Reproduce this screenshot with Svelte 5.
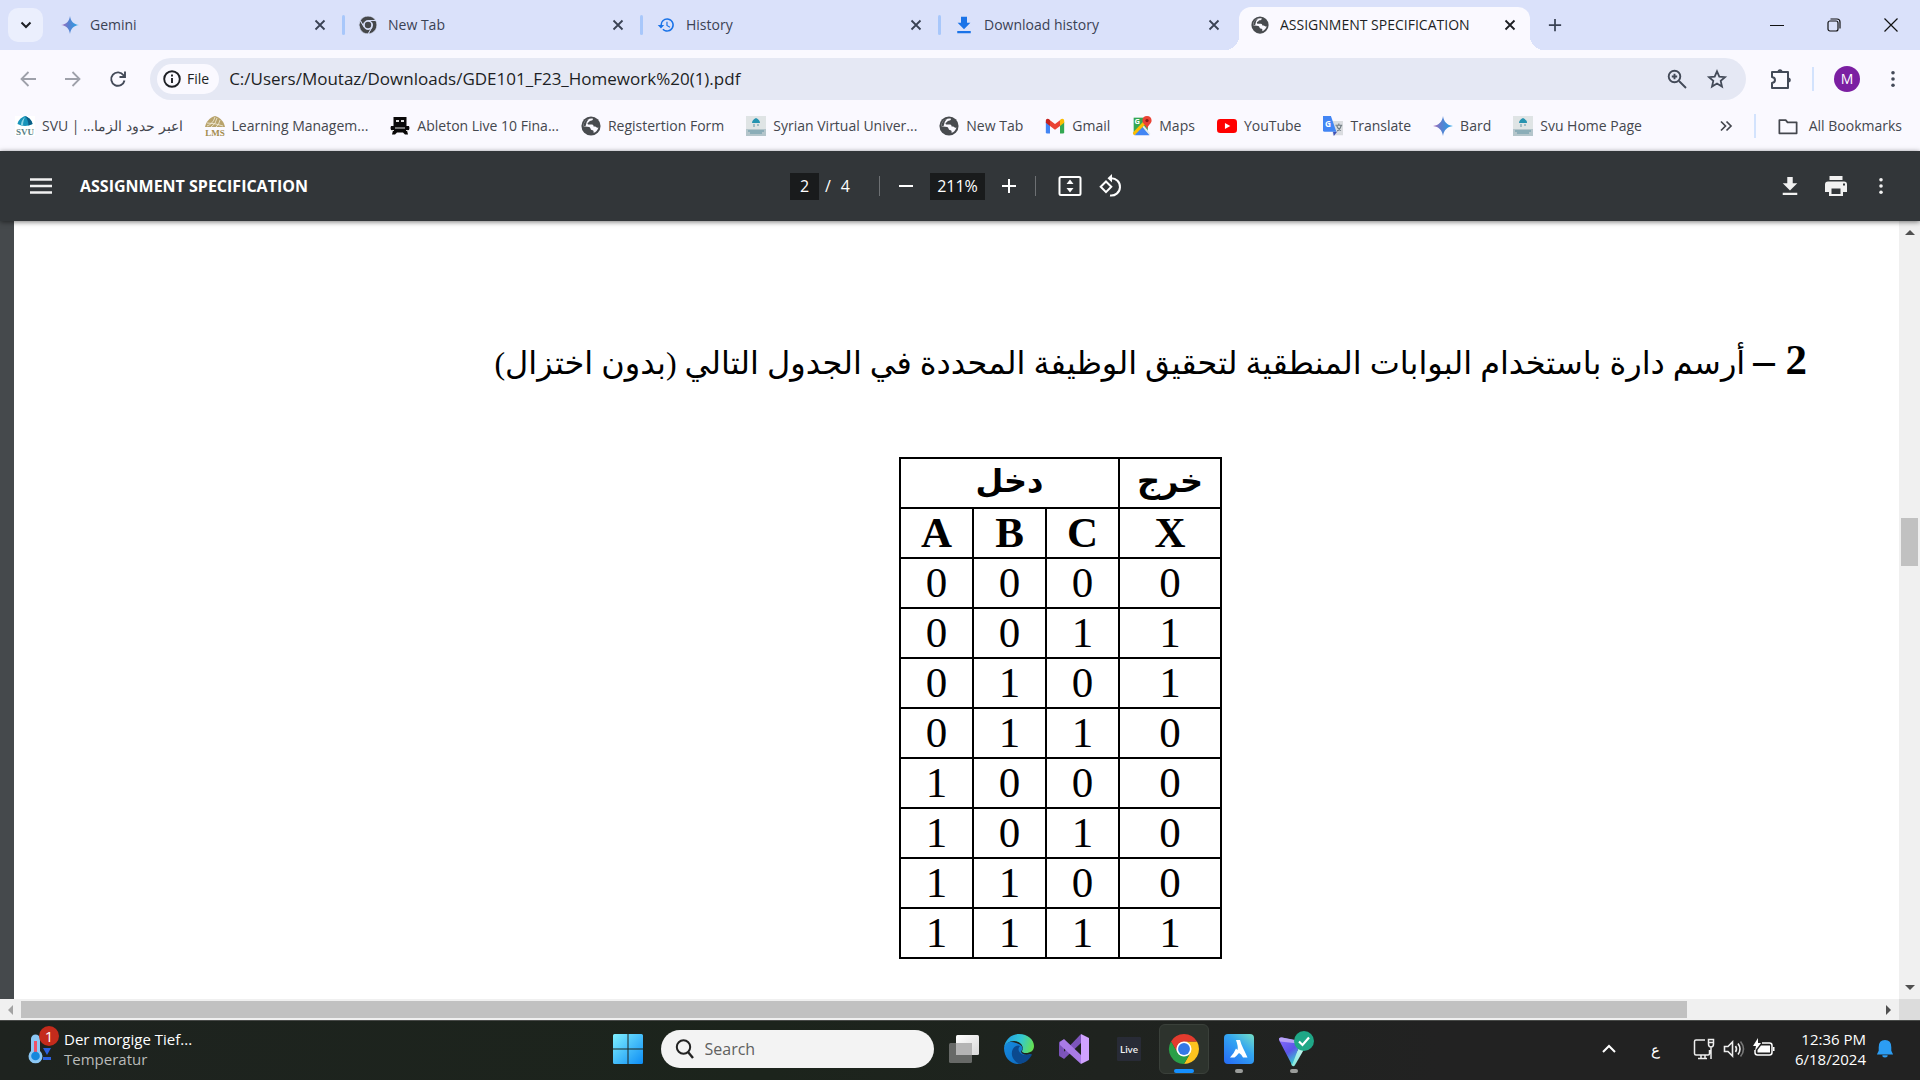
<script>
  const tabs = [
    { icon: 'spark', title: 'Gemini' },
    { icon: 'chromeMono', title: 'New Tab' },
    { icon: 'history', title: 'History' },
    { icon: 'downloadBlue', title: 'Download history' },
    { icon: 'globe', title: 'ASSIGNMENT SPECIFICATION', active: true }
  ];
  const bookmarks = [
    { icon: 'svu', title: 'SVU | ...اعبر حدود الزما' },
    { icon: 'lms', title: 'Learning Managem...' },
    { icon: 'ableton', title: 'Ableton Live 10 Fina...' },
    { icon: 'globe', title: 'Registertion Form' },
    { icon: 'svuPage', title: 'Syrian Virtual Univer...' },
    { icon: 'globe', title: 'New Tab' },
    { icon: 'gmail', title: 'Gmail' },
    { icon: 'maps', title: 'Maps' },
    { icon: 'youtube', title: 'YouTube' },
    { icon: 'translate', title: 'Translate' },
    { icon: 'spark', title: 'Bard' },
    { icon: 'svuPage', title: 'Svu Home Page' }
  ];
  const rows = [
    [0, 0, 0, 0],
    [0, 0, 1, 1],
    [0, 1, 0, 1],
    [0, 1, 1, 0],
    [1, 0, 0, 0],
    [1, 0, 1, 0],
    [1, 1, 0, 0],
    [1, 1, 1, 1]
  ];
  const apps = [
    { icon: 'taskview', label: 'Task View' },
    { icon: 'edge', label: 'Microsoft Edge' },
    { icon: 'vs', label: 'Visual Studio' },
    { icon: 'live', label: 'Ableton Live' },
    { icon: 'chrome', label: 'Google Chrome', state: 'current' },
    { icon: 'appA', label: 'Launcher', state: 'open' },
    { icon: 'vpn', label: 'VPN', state: 'open' }
  ];
  let url = $state('C:/Users/Moutaz/Downloads/GDE101_F23_Homework%20(1).pdf');
  let page = $state('2');
  let zoom = $state('211%');
  let query = $state('');
</script>

{#snippet icon(name)}
  {#if name === 'spark'}
    <svg viewBox="0 0 20 20"><defs><linearGradient id="spark" x1="0" x2="1" y1="0" y2="0"><stop offset="0" stop-color="#b06bb5" /><stop offset=".4" stop-color="#5b7fd0" /><stop offset="1" stop-color="#1fa5e8" /></linearGradient></defs><path fill="url(#spark)" d="M10 0c.7 5.600 4 9.300 10 10-6 .7-9.300 4.400-10 10C9.300 14.400 6 10.700 0 10 6 9.300 9.300 5.600 10 0z" /></svg>
  {:else if name === 'chromeMono'}
    <svg viewBox="0 0 48 48"><g fill="#45474a" stroke="#dae1fa" stroke-width="2.500"><path d="M24 12h20.780A24 24 0 0 1 24 48l10.390-18A12 12 0 0 0 24 12z" /><path d="M24 12h20.780A24 24 0 0 0 3.200 12l10.400 18A12 12 0 0 1 24 12z" /><path d="M34.390 30L24 48A24 24 0 0 1 3.200 12l10.400 18a12 12 0 0 0 20.790 0z" /></g><circle cx="24" cy="24" r="8.500" fill="#45474a" /></svg>
  {:else if name === 'history'}
    <svg viewBox="0 0 24 24" fill="#1a73e8"><path d="M13.500 3a9 9 0 0 0-9 9H1l4.300 4.500L9.600 12H6.500a7 7 0 1 1 2.060 4.940L7.140 18.360A9 9 0 1 0 13.500 3z" /><path d="M12.500 7.500V13l4.400 2.700.8-1.300-3.600-2.200V7.500z" /></svg>
  {:else if name === 'downloadBlue'}
    <svg viewBox="0 0 24 24" fill="#1a73e8"><path d="M8 1h8v8h4.500L12 17.500 3.500 9H8zM3 20h18v3H3z" /></svg>
  {:else if name === 'globe'}
    <svg viewBox="0 0 24 24"><circle cx="12" cy="12" r="11.500" fill="#484b4f" /><path fill="#faf9ff" d="M14.500 3.300c-.2 1.600-1.200 2.300-2.900 2.400-1.800.1-1.400 1.700-2.900 2.100-1 .3-1.200 1.800-.2 2.400h4.700c1.300 0 1.800 1 1.900 2.500h1.800c1.600 0 1.300 2.200 4.100 1-.9 3.200-3.200 5.600-6 6.500.6-2.700-.2-3.300-2.300-3.500-1.300-.1-1.200-3-2.900-3.500L3 12.200C2.700 7 7.500 1.900 14.500 3.300z" /><path fill="#484b4f" d="M3 12c0-4 2.500-7.500 6.500-8.700L7 6.800 5.500 12z" /></svg>
  {:else if name === 'svu'}
    <svg viewBox="0 0 20 20"><path fill="#fff" d="M0 0h20v20H0z" /><path fill="#1794ba" d="M10 0C5 2 3 5 2.500 8q7.500 4 15 0C17 5 15 2 10 0z" /><path fill="#0b5d86" d="M10 0c5 2 7 5 7.500 8q-2 1-4 1.400C13.500 6 12 2 10 0z" /><path fill="#8bd4e4" d="M10 1C7 4 6 6 6 9l2 .3C8 6 9 3 10 1z" /><text x="10" y="19" font-size="9" font-weight="bold" text-anchor="middle" fill="#5b7f86" font-family="Liberation Serif, serif">SVU</text></svg>
  {:else if name === 'lms'}
    <svg viewBox="0 0 20 20"><path fill="#b8a36c" d="M10 0C4 2 1 6 0 11h20C19 6 16 2 10 0z" /><path stroke="#f4efdc" stroke-width=".8" fill="none" d="M2 10q6-2 8-9M6 11q5-3 6-9M11 11q3-2 4-7M2 7q8 0 16 3" /><text x="10" y="20" font-size="9" font-weight="bold" text-anchor="middle" fill="#a38c4c" font-family="Liberation Serif, serif">LMS</text></svg>
  {:else if name === 'ableton'}
    <svg viewBox="0 0 20 20"><path fill="#090909" d="M3.500 1h13v9H19q1 2 0 4l-2 .5 1 4h-3l-2-2H7l-2 2H2l1-4-2-.5q-1-2 0-4h2.500z" /><path fill="#ddd" d="M6 4h3v2H6zM11 4h3v2h-3zM5 11.500h10v1H5zM1 14h3v1H1zM16 14h3v1h-3z" /></svg>
  {:else if name === 'svuPage'}
    <svg viewBox="0 0 20 20"><path fill="#dfe4e5" d="M0 0h20v20H0z" /><path fill="#b4c5cb" d="M0 13h20v7H0z" /><path fill="#2593b0" d="M10 2Q6 4 6 7h8q0-3-4-5z" /><path stroke="#6295a5" d="M8 8v3M12 8v2M2 15h16M4 17h12" /></svg>
  {:else if name === 'gmail'}
    <svg viewBox="0 0 24 24"><path fill="#4285f4" d="M1 7v12.500Q1 21 2.500 21H6V10z" /><path fill="#34a853" d="M18 10v11h3.500q1.500 0 1.500-1.500V7z" /><path fill="#ea4335" d="M6 5l6 4.600L18 5v7l-6 4.500L6 12z" /><path fill="#c5221f" d="M1 6c0-3 2.500-3.500 5-1.300V12L1 8z" /><path fill="#fbbc04" d="M23 6c0-3-2.500-3.500-5-1.300V12l5-4z" /></svg>
  {:else if name === 'maps'}
    <svg viewBox="0 0 24 24"><path fill="#34a853" d="M2 2h17v20H2z" /><path fill="#e6eaec" d="M14 11l8 10q0 2-2 2l-8-10z" /><path fill="#4285f4" d="M3 23l9-10 9 10z" /><path fill="#fbbc04" d="M1 20L15 5l2 4L3 23q-2-1-2-3z" /><path fill="#ea4335" d="M18 0c-3.500 0-5.500 2.500-5.500 5.500 0 4 4 5 5.500 10 1.500-5 5.500-6 5.500-10C23.500 2.500 21.500 0 18 0z" /><circle cx="18" cy="5.500" r="2" fill="#8c1b16" /><text x="3" y="10" font-size="9" font-weight="bold" fill="#fff" font-family="Open Sans, sans-serif">G</text></svg>
  {:else if name === 'youtube'}
    <svg viewBox="0 0 24 24"><rect y="3.500" width="24" height="17" rx="4" fill="#f00" /><path fill="#fff" d="M9.500 8.300v7.400L16 12z" /></svg>
  {:else if name === 'translate'}
    <svg viewBox="0 0 24 24"><path fill="#dadce0" d="M9 6h15v17H12z" /><path fill="#3f51b5" d="M12 19h5l-4 5z" /><path fill="#4285f4" d="M0 0h9.500L16 19H2q-2 0-2-2z" /><text x="2.500" y="13" font-size="10" font-weight="bold" fill="#fff" font-family="Open Sans, sans-serif">G</text><path fill="none" stroke="#6f7b82" stroke-width="1.300" d="M15 11h8M19 9v2M22 11q-1 5-5 7M16.500 12q1 3 5 5.500" /></svg>
  {:else if name === 'close'}
    <svg viewBox="0 0 12 12" stroke="currentColor" stroke-width="1.800" fill="none"><path d="M1.500 1.500l9 9M10.500 1.500l-9 9" /></svg>
  {:else if name === 'chevronDown'}
    <svg viewBox="0 0 12 12" stroke="currentColor" stroke-width="2" fill="none"><path d="M1.500 3.500L6 8l4.500-4.500" /></svg>
  {:else if name === 'plus'}
    <svg viewBox="0 0 16 16" stroke="currentColor" stroke-width="2" fill="none"><path d="M8 1v14M1 8h14" /></svg>
  {:else if name === 'minus'}
    <svg viewBox="0 0 16 16" stroke="currentColor" stroke-width="2" fill="none"><path d="M1 8h14" /></svg>
  {:else if name === 'winMin'}
    <svg viewBox="0 0 14 14" stroke="#111" fill="none"><path d="M0 7.500h14" /></svg>
  {:else if name === 'winRestore'}
    <svg viewBox="0 0 14 14" stroke="#111" stroke-width="1.200" fill="none"><rect x="1" y="3" width="10" height="10" rx="2" /><path d="M3.500 1h6.500q3 0 3 3v6.500" /></svg>
  {:else if name === 'winClose'}
    <svg viewBox="0 0 14 14" stroke="#111" stroke-width="1.200" fill="none"><path d="M.5.5l13 13M13.500.5l-13 13" /></svg>
  {:else if name === 'back'}
    <svg viewBox="0 0 16 16" stroke="currentColor" stroke-width="1.800" fill="none"><path d="M8.500 1L1.500 8l7 7M1.500 8H16" /></svg>
  {:else if name === 'forward'}
    <svg viewBox="0 0 16 16" stroke="currentColor" stroke-width="1.800" fill="none"><path d="M7.500 1l7 7-7 7M14.500 8H0" /></svg>
  {:else if name === 'reload'}
    <svg viewBox="0 0 16 16" stroke="currentColor" stroke-width="1.900" fill="none"><path d="M14.500 9.500A6.700 6.700 0 1 1 13.500 4.300L15 6M15 .5V6H9.500" /></svg>
  {:else if name === 'info'}
    <svg viewBox="0 0 18 18" fill="none" stroke="currentColor" stroke-width="1.900"><circle cx="9" cy="9" r="7.800" /><path d="M9 8v5M9 4.500v2" /></svg>
  {:else if name === 'magnify'}
    <svg viewBox="0 0 20 20" fill="none" stroke="currentColor" stroke-width="1.900"><circle cx="7.500" cy="7.500" r="5.800" /><path d="M12 12l7 7M7.500 4.800v5.400M4.800 7.500h5.400" /></svg>
  {:else if name === 'star'}
    <svg viewBox="0 0 20 20" fill="none" stroke="currentColor" stroke-width="1.800"><path d="M10 2.300l2.300 5.300 5.700.5-4.300 3.800 1.300 5.700-5-3-5 3 1.300-5.700L2 8.100l5.700-.5z" /></svg>
  {:else if name === 'puzzle'}
    <svg viewBox="0 0 22 22"><path fill="none" stroke="currentColor" stroke-width="2" stroke-linejoin="round" d="M2 4h16v16H2v-5q3-.5 3-3t-3-3z" /><path fill="currentColor" d="M7.500 4a2.500 2.800 0 0 1 5 0zM18 9.500a2.800 2.500 0 0 1 0 5z" /></svg>
  {:else if name === 'dots'}
    <svg viewBox="0 0 20 20" fill="currentColor"><circle cx="10" cy="3" r="2" /><circle cx="10" cy="10" r="2" /><circle cx="10" cy="17" r="2" /></svg>
  {:else if name === 'more'}
    <svg viewBox="0 0 12 12" stroke="currentColor" stroke-width="1.700" fill="none"><path d="M1 1.500L5.500 6 1 10.500M6.500 1.500L11 6l-4.500 4.500" /></svg>
  {:else if name === 'folder'}
    <svg viewBox="0 0 22 20" stroke="currentColor" stroke-width="1.900" fill="none" stroke-linejoin="round"><path d="M1.500 3.500h7l2 2.500h10v12h-19z" /></svg>
  {:else if name === 'menu'}
    <svg viewBox="0 0 22 16" stroke="currentColor" stroke-width="2.400"><path d="M0 1.500h22M0 8h22M0 14.500h22" /></svg>
  {:else if name === 'fit'}
    <svg viewBox="0 0 24 24" fill="none" stroke="currentColor" stroke-width="2"><rect x="1.500" y="3" width="21" height="18" rx="1.500" /><path fill="currentColor" stroke="none" d="M12 5.500L8.500 10h7zM12 18.500L8.500 14h7z" /></svg>
  {:else if name === 'rotate'}
    <svg viewBox="0 0 24 24" fill="none" stroke="currentColor" stroke-width="2"><path d="M8 7.500l5.300 5.300L8 18.100l-5.300-5.300zM13 4.200a8.700 8.700 0 1 1-1 17.300" /><path fill="currentColor" stroke="none" d="M14 0v8.500L9.500 4.200z" /></svg>
  {:else if name === 'download'}
    <svg viewBox="0 0 20 22" fill="currentColor"><path d="M7 1h6v7h5l-8 8-8-8h5zM2 18.500h16V21H2z" /></svg>
  {:else if name === 'print'}
    <svg viewBox="0 0 24 24" fill="currentColor"><path d="M5.500 2h13v4h-13zM4 7.500h16a3 3 0 0 1 3 3V18h-4v4H5v-4H1v-7.500a3 3 0 0 1 3-3zM7.500 14.500V20h9v-5.500zM19 9.500v2h2v-2z" fill-rule="evenodd" /></svg>
  {:else if name === 'windows'}
    <svg viewBox="0 0 30 30"><defs><linearGradient id="win" x1="0" y1="0" x2="1" y2="1"><stop offset="0" stop-color="#7ff0ff" /><stop offset="1" stop-color="#0d8df5" /></linearGradient></defs><path fill="url(#win)" d="M1.500 0h13v14.500H0v-13Q0 0 1.500 0zM15.500 0h13Q30 0 30 1.500v13H15.500zM0 15.500h14.500V30h-13Q0 30 0 28.500zM15.500 15.500H30v13q0 1.500-1.500 1.500h-13z" /></svg>
  {:else if name === 'search'}
    <svg viewBox="0 0 20 20" fill="none" stroke="#222" stroke-width="2"><circle cx="8.500" cy="8" r="6.700" /><path d="M13 13l5 6" stroke-width="2.400" /></svg>
  {:else if name === 'taskview'}
    <svg viewBox="0 0 30 30"><defs><linearGradient id="tv" x1="0" y1="0" x2="1" y2="1"><stop offset="0" stop-color="#fff" /><stop offset="1" stop-color="#d8d8d8" /></linearGradient></defs><rect y="9" width="23" height="20" rx="1.500" fill="#676967" /><rect x="7" y="1" width="23" height="20" rx="1.500" fill="url(#tv)" /><path fill="#b4b4b4" d="M7 9h16v12H8.500Q7 21 7 19.500z" /></svg>
  {:else if name === 'edge'}
    <svg viewBox="0 0 30 30"><defs><linearGradient id="eg" x1="0" y1=".3" x2="1" y2=".5"><stop offset="0" stop-color="#219ee6" /><stop offset=".55" stop-color="#34c8d2" /><stop offset="1" stop-color="#65e052" /></linearGradient><linearGradient id="eb" x1="0" y1="0" x2="1" y2="1"><stop offset="0" stop-color="#168be0" /><stop offset="1" stop-color="#0c66bc" /></linearGradient></defs><path fill="url(#eb)" d="M0 14C1 8 7 7 12 9c5 1 8 5 6 7-3 3 2 6 9 4-3 7-9 10-14 10C6 29.500 0 23 0 14z" /><path fill="#0b498f" d="M12 12c-6 3-6 13 3 17.800 6 0 10-4 12.500-8.300.7-1.300 0-1.700-1-1.300-5 2.300-12 0-12-5.200 0-1 .5-2 1.500-3-1.500-1-3-.5-4 0z" /><path fill="url(#eg)" d="M0 14C1 5 8 0 15 0c9 0 15 6 15 12 0 5-4 7-8 7-3 0-5-1-3.500-3C20 13 17 7 10 7 5 7 1 10 0 14z" /></svg>
  {:else if name === 'vs'}
    <svg viewBox="0 0 30 30"><path fill="#6b47a3" d="M0 8l4-2v18l-4-2z" /><path fill="#7a52b8" d="M4 6l3 2-2 16-5-3V9z" /><path fill="#1f261f" d="M5 11l4.500 4L5 19z" /><path fill="#7d55bb" d="M1 22L22 0v9L5 25z" /><path fill="#a97be6" d="M1 8l4-3 17 16v9L1 11z" /><path fill="#d0a2ff" d="M22 0l8 4v22l-8 4z" /></svg>
  {:else if name === 'live'}
    <svg viewBox="0 0 30 30"><rect x="3" y="3" width="24" height="24" rx="1" fill="#282b36" /><text x="15" y="19" font-size="10" font-weight="600" text-anchor="middle" fill="#f2f2f2" font-family="Lato, sans-serif">Live</text></svg>
  {:else if name === 'chrome'}
    <svg viewBox="0 0 48 48"><circle cx="24" cy="24" r="13" fill="#fff" /><path fill="#fcc31e" d="M24 12h20.780A24 24 0 0 1 24 48l10.390-18A12 12 0 0 0 24 12z" /><path fill="#e33b2e" d="M24 12h20.780A24 24 0 0 0 3.200 12l10.400 18A12 12 0 0 1 24 12z" /><path fill="#2a9f47" d="M34.390 30L24 48A24 24 0 0 1 3.200 12l10.400 18a12 12 0 0 0 20.790 0z" /><circle cx="24" cy="24" r="9.500" fill="#3478e6" /></svg>
  {:else if name === 'appA'}
    <svg viewBox="0 0 30 30"><defs><linearGradient id="aa" x1=".2" y1="1" x2="1" y2="0"><stop offset="0" stop-color="#2772f6" /><stop offset=".55" stop-color="#33a6f1" /><stop offset="1" stop-color="#76e0c5" /></linearGradient></defs><rect width="30" height="30" rx="4" fill="url(#aa)" /><path fill="#fff" d="M12 6h4q1 4 3 8t4.500 9.500h-4.500q-1.500-3.500-4-4.500-2.500 3-4.500 4.500H6q4-4 6-9l1.500 1.500q1-3-1.500-10z" /></svg>
  {:else if name === 'vpn'}
    <svg viewBox="0 0 36 36"><defs><linearGradient id="vp" x1="0" y1="0" x2=".6" y2="1"><stop offset="0" stop-color="#8c6cff" /><stop offset=".6" stop-color="#5b55e8" /><stop offset="1" stop-color="#3bc9d0" /></linearGradient><linearGradient id="vq" x1="0" y1="1" x2="1" y2="0"><stop offset="0" stop-color="#7fe6dc" /><stop offset="1" stop-color="#d9f8f4" /></linearGradient></defs><path fill="url(#vq)" d="M15 30L26 12l4 3-11 19q-1.500 2.500-3.500 0z" /><path fill="url(#vp)" d="M3 8q0-2 3-1.500L22 10q3.500 1 1.500 4.500L16.500 33q-1 0-1.500-1L3.500 10z" /><path fill="#b7a2f5" d="M3 8q0-2 3-1.500L22 9.500v3L4 10.500z" /><circle cx="28" cy="10" r="10" fill="#1fa787" /><path fill="none" stroke="#fff" stroke-width="2.200" d="M23 10.500l3.500 3.500 6.500-7.500" /></svg>
  {:else if name === 'caretUp'}
    <svg viewBox="0 0 16 16" fill="none" stroke="#fff" stroke-width="2"><path d="M2 11l6-6 6 6" /></svg>
  {:else if name === 'network'}
    <svg viewBox="0 0 22 22" fill="none" stroke="#eee" stroke-width="1.500"><path d="M12 2H3q-1.500 0-1.500 1.500v12Q1.500 17 3 17h12q1.500 0 1.500-1.500V12M5 20.500h9M8 17v3M12 17v3M18 9v12M15.500 1.500h5V6q0 3-2.500 3t-2.500-3zM15.500 4.500h5" /></svg>
  {:else if name === 'volume'}
    <svg viewBox="0 0 22 22" fill="none" stroke="#eee" stroke-width="1.600"><path d="M1.500 8.500h3.500L9.500 4v14L5 13.500H1.500zM12.500 8q2 3 0 6M15 5.500q4 5.500 0 11" /><path stroke="#777" d="M17.500 3.500q6 7.500 0 15" /></svg>
  {:else if name === 'battery'}
    <svg viewBox="0 0 22 22"><path fill="none" stroke="#fff" stroke-width="1.500" d="M9 5h7.500Q19 5 19 7.500v7q0 2.500-2.500 2.500h-12Q2 17 2 14.500V12" /><path fill="#fff" d="M8 7.500h9v7H4.500V12zM20 9h1.500v4H20zM5 0L0 8h3l-1 5 6-8H5z" /></svg>
  {:else if name === 'bell'}
    <svg viewBox="0 0 18 20" fill="#2c9df3"><path d="M9 0Q2 0 2 8v4l-2 4h18l-2-4V8q0-8-7-8zM6 17h6q0 2.500-3 2.500T6 17z" /></svg>
  {:else if name === 'thermo'}
    <svg viewBox="0 0 26 30"><path fill="#8cc8f5" d="M3 5a4.500 4.500 0 0 1 9 0v12a7 7 0 1 1-9 0z" /><path fill="#ef5368" d="M6 7h3v12H6z" /><circle cx="7.500" cy="22" r="4.300" fill="#1487dc" /><path fill="#2b61e0" d="M15 14h8l-4 7zM15 23h8v3h-8z" /></svg>
  {/if}
{/snippet}

<div class="screen">
  <header class="tabstrip">
    <button class="tabsearch" aria-label="Search tabs"><span class="i12">{@render icon('chevronDown')}</span></button>
    <div class="tabs" role="tablist">
      {#each tabs as tab}
        <div class="tab" class:active={tab.active} role="tab" aria-selected={!!tab.active} tabindex="0">
          <span class="i18">{@render icon(tab.icon)}</span>
          <span class="title">{tab.title}</span>
          <button class="i12" aria-label="Close tab">{@render icon('close')}</button>
        </div>
      {/each}
    </div>
    <button class="newtab" aria-label="New tab"><span class="i14">{@render icon('plus')}</span></button>
    <div class="window">
      <button class="i14" aria-label="Minimize">{@render icon('winMin')}</button>
      <button class="i14" aria-label="Restore">{@render icon('winRestore')}</button>
      <button class="i14" aria-label="Close">{@render icon('winClose')}</button>
    </div>
  </header>

  <div class="toolbar">
    <nav class="nav">
      <button class="i16 faded" aria-label="Back">{@render icon('back')}</button>
      <button class="i16 faded" aria-label="Forward">{@render icon('forward')}</button>
      <button class="i16" aria-label="Reload">{@render icon('reload')}</button>
    </nav>
    <div class="omnibox">
      <button class="chip"><span class="i18">{@render icon('info')}</span>File</button>
      <input aria-label="Address" bind:value={url} />
      <button class="i20" aria-label="Zoom">{@render icon('magnify')}</button>
      <button class="i20" aria-label="Bookmark this tab">{@render icon('star')}</button>
    </div>
    <div class="extras">
      <button class="i22" aria-label="Extensions">{@render icon('puzzle')}</button>
      <span class="rule"></span>
      <button class="avatar" aria-label="Profile">M</button>
      <button class="i18 kebab" aria-label="Menu">{@render icon('dots')}</button>
    </div>
  </div>

  <nav class="bookmarks">
    {#each bookmarks as mark}
      <a href="#top"><span class="i20">{@render icon(mark.icon)}</span><span dir="ltr">{mark.title}</span></a>
    {/each}
    <div class="rest">
      <button class="i12" aria-label="More bookmarks">{@render icon('more')}</button>
      <span class="rule"></span>
      <a class="all" href="#top"><span class="i20">{@render icon('folder')}</span>All Bookmarks</a>
    </div>
  </nav>

  <div class="pdfbar">
    <div class="side">
      <button class="i22" aria-label="Menu">{@render icon('menu')}</button>
      <h1>ASSIGNMENT SPECIFICATION</h1>
    </div>
    <div class="mid">
      <input class="page" aria-label="Page" bind:value={page} />
      <span class="of">/</span><span class="total">4</span>
      <span class="line"></span>
      <button class="i16" aria-label="Zoom out">{@render icon('minus')}</button>
      <input class="zoom" aria-label="Zoom level" bind:value={zoom} />
      <button class="i16" aria-label="Zoom in">{@render icon('plus')}</button>
      <span class="line"></span>
      <div class="views">
        <button class="i24" aria-label="Fit to page">{@render icon('fit')}</button>
        <button class="i24" aria-label="Rotate">{@render icon('rotate')}</button>
      </div>
    </div>
    <div class="side end">
      <button class="i20" aria-label="Download">{@render icon('download')}</button>
      <button class="i24" aria-label="Print">{@render icon('print')}</button>
      <button class="i18" aria-label="More actions">{@render icon('dots')}</button>
    </div>
  </div>

  <div class="viewer">
    <main class="sheet" dir="rtl" lang="ar">
      <h2><b>2 –</b> أرسم دارة باستخدام البوابات المنطقية لتحقيق الوظيفة المحددة في الجدول التالي (بدون اختزال)</h2>
      <table dir="ltr">
        <colgroup><col span="3" class="in" /><col class="out" /></colgroup>
        <thead>
          <tr class="ar"><th colspan="3">دخل</th><th>خرج</th></tr>
          <tr><th>A</th><th>B</th><th>C</th><th>X</th></tr>
        </thead>
        <tbody>
          {#each rows as row}
            <tr>{#each row as bit}<td>{bit}</td>{/each}</tr>
          {/each}
        </tbody>
      </table>
    </main>
    <div class="vscroll"><i class="arrow up"></i><div class="track"><div class="thumb"></div></div><i class="arrow down"></i></div>
    <div class="hscroll"><i class="arrow left"></i><div class="track"><div class="thumb"></div></div><i class="arrow right"></i></div>
    <div class="corner"></div>
  </div>

  <footer class="taskbar">
    <button class="weather">
      <span class="thermo">{@render icon('thermo')}<span class="badge">1</span></span>
      <span class="lines"><span>Der morgige Tief...</span><span class="dim">Temperatur</span></span>
    </button>
    <div class="dock">
      <button class="i30" aria-label="Start">{@render icon('windows')}</button>
      <label class="search"><span class="i20">{@render icon('search')}</span><input aria-label="Search" placeholder="Search" bind:value={query} /></label>
      <div class="apps">
        {#each apps as app}
          <button class="app {app.state ?? ''}" class:large={app.icon === 'vpn'} aria-label={app.label}>{@render icon(app.icon)}</button>
        {/each}
      </div>
    </div>
    <div class="tray">
      <button class="i16" aria-label="Hidden icons">{@render icon('caretUp')}</button>
      <button class="lang" lang="ar">ع</button>
      <div class="status">
        <span class="i22">{@render icon('network')}</span>
        <span class="i22">{@render icon('volume')}</span>
        <span class="i22">{@render icon('battery')}</span>
      </div>
      <div class="clock"><span>12:36 PM</span><span>6/18/2024</span></div>
      <button class="i18" aria-label="Notifications">{@render icon('bell')}</button>
    </div>
  </footer>
</div>

<style>
  :global(body) { margin: 0; }
  * { box-sizing: border-box; }
  .screen {
    display: flex; flex-direction: column; min-height: 100vh; background: #faf9ff;
    font: 14px/20px "Open Sans", "Noto Sans", sans-serif; color: #44474e; overflow: hidden;
  }
  button { border: 0; padding: 0; background: none; color: inherit; font: inherit; flex: none; }
  input { border: 0; padding: 0; background: none; color: inherit; font: inherit; min-width: 0; outline: 0; }
  a { color: inherit; text-decoration: none; }
  svg { display: block; width: 100%; height: 100%; overflow: visible; }
  .i12, .i14, .i16, .i18, .i20, .i22, .i24, .i30 { display: block; flex: none; }
  .i12 { width: 12px; height: 12px; }
  .i14 { width: 14px; height: 14px; }
  .i16 { width: 16px; height: 16px; }
  .i18 { width: 18px; height: 18px; }
  .i20 { width: 20px; height: 20px; }
  .i22 { width: 22px; height: 22px; }
  .i24 { width: 24px; height: 24px; }
  .i30 { width: 30px; height: 30px; }

  .tabstrip { display: flex; align-items: center; height: 50px; padding: 0 22px 0 8px; background: #dae1fa; color: #3a4254; }
  .tabsearch { display: grid; place-items: center; width: 35px; height: 34px; border-radius: 10px; background: #ebeffd; color: #1d1f24; margin-right: 4px; }
  .tabs { display: flex; align-self: stretch; min-width: 0; }
  .tab { display: flex; align-items: center; gap: 11px; flex: 0 1 298px; width: 298px; min-width: 0; padding: 0 19px 0 14px; position: relative; }
  .tab:not(.active)::after { content: ""; position: absolute; right: 0; top: 15px; width: 3px; height: 20px; border-radius: 2px; background: #a8c7fa; }
  .tab:nth-last-child(2)::after { display: none; }
  .title { flex: 1; overflow: hidden; white-space: nowrap; }
  .tab.active { flex-basis: 291px; margin-top: 7px; padding: 0 14px 7px 12px; border-radius: 12px 12px 0 0; background: #faf9ff; color: #1d1f24; }
  .tab.active::before, .tab.active::after { content: ""; position: absolute; bottom: 0; width: 14px; height: 14px; }
  .tab.active::before { right: 100%; background: radial-gradient(circle at 0 0, transparent 14px, #faf9ff 14px); }
  .tab.active::after { display: block; top: auto; right: auto; left: 100%; border-radius: 0; background: radial-gradient(circle at 100% 0, transparent 14px, #faf9ff 14px); }
  .newtab { margin-left: 18px; }
  .window { display: flex; gap: 43px; margin-left: auto; }

  .toolbar { display: flex; align-items: center; height: 58px; padding: 0 18px 0 20px; color: #434a58; }
  .nav { display: flex; gap: 29px; width: 130px; }
  .faded { color: #9ea1aa; }
  .omnibox { display: flex; align-items: center; flex: 1; height: 42px; padding: 0 19px 0 7px; border-radius: 21px; background: #e5e8f4; }
  .chip { display: flex; align-items: center; gap: 6px; height: 30px; padding: 0 10px 0 6px; border-radius: 15px; background: #faf9ff; color: #1d1f24; }
  .omnibox input { flex: 1; margin-left: 10px; font-size: 17px; color: #1d1f24; }
  .omnibox .i20 + .i20 { margin-left: 20px; }
  .extras { display: flex; align-items: center; margin-left: 24px; gap: 20px; }
  .kebab { margin-left: 4px; }
  .rule { width: 2px; height: 24px; background: #d3e3fd; }
  .avatar { width: 26px; height: 26px; border-radius: 50%; background: #7b1fa2; color: #fff; }

  .bookmarks { display: flex; align-items: center; gap: 22px; height: 43px; padding: 0 18px 7px 15px; white-space: nowrap; }
  .bookmarks a { display: flex; align-items: center; gap: 7px; }
  .rest { display: flex; align-items: center; gap: 22px; margin-left: auto; }
  .rest .all { gap: 11px; }

  .pdfbar { display: grid; grid-template-columns: 1fr auto 1fr; align-items: center; height: 70px; padding: 0 30px; background: #323639; color: #f1f1f1; box-shadow: 0 1px 5px #0008; z-index: 1; }
  .side { display: flex; align-items: center; gap: 28px; }
  .side .i22 { height: 16px; }
  .end { justify-content: flex-end; gap: 24px; }
  h1 { margin: 0; font-size: 16px; line-height: 20px; font-weight: 700; color: #fff; }
  .mid { display: flex; align-items: center; color: #fff; font-size: 16px; margin-right: 8px; }
  .mid input { height: 27px; background: #191b1c; text-align: center; }
  .page { width: 29px; }
  .zoom { width: 55px; margin: 0 16px; }
  .of { margin: 0 10px 0 6px; }
  .total { margin-right: 11px; }
  .line { width: 1px; height: 20px; background: #6d7073; margin: 0 18px; }
  .views { display: flex; gap: 16px; margin-left: 4px; }

  .viewer { flex: 1; display: grid; grid-template: 1fr 21px / 1fr 21px; background: #f0f0f0; }
  .sheet { border-left: 14px solid #45494c; background: #fff; color: #000; padding: 109px 92px 39px 300px; font-family: "Liberation Serif", "DejaVu Sans", serif; }
  h2 { margin: 0; font-size: 32px; line-height: 60px; font-weight: 400; white-space: nowrap; }
  h2 b { font-size: 43px; }
  table { margin: 64px auto 0; border-collapse: collapse; table-layout: fixed; width: 321px; text-align: center; font-size: 43px; line-height: 48px; }
  .in { width: 73px; }
  .out { width: 102px; }
  th, td { padding: 0; height: 50px; border: 2px solid #000; }
  .ar { font-size: 32px; line-height: 44px; }
  .ar th { vertical-align: top; }

  .vscroll { display: flex; flex-direction: column; align-items: center; padding: 9px 0; }
  .hscroll { display: flex; align-items: center; padding: 0 8px; }
  .track { flex: 1; display: flex; }
  .vscroll .track { width: 17px; flex-direction: column; padding-top: 283px; }
  .vscroll .thumb { height: 48px; background: #c1c1c1; }
  .hscroll .track { height: 17px; margin: 0 14px 0 8px; }
  .hscroll .thumb { width: 90%; background: #c1c1c1; }
  .corner { background: #dcdcdc; }
  .arrow { border: 5px solid transparent; }
  .up { border-top: 0; border-bottom-color: #505050; }
  .down { border-bottom: 0; border-top-color: #505050; }
  .left { border-left: 0; border-right-color: #a3a3a3; }
  .right { border-right: 0; border-left-color: #505050; }

  .taskbar { display: grid; grid-template-columns: 1fr auto 1fr; align-items: center; height: 60px; border-top: 1px solid #484a48; background: linear-gradient(90deg, #1e231f, #1c241c 40%, #222 75%); color: #fff; padding: 0 26px 3px 28px; font-size: 15px; }
  .weather { display: flex; justify-self: start; align-items: center; gap: 10px; text-align: left; }
  .thermo { position: relative; width: 26px; height: 30px; }
  .badge { position: absolute; left: 11px; top: -8px; width: 20px; height: 20px; border-radius: 50%; background: #c42b1c; text-align: center; line-height: 20px; }
  .lines, .clock { display: flex; flex-direction: column; }
  .dim { color: #b9bbb9; }
  .dock { display: flex; align-items: center; margin-left: 9px; }
  .search { display: flex; align-items: center; gap: 10px; width: 273px; height: 38px; margin: 0 5px 0 18px; padding: 0 14px; border-radius: 19px; background: #f3f3f3; }
  .search input { flex: 1; font-size: 16px; color: #222; }
  .search input::placeholder { color: #606060; opacity: 1; }
  .apps { display: flex; gap: 5px; }
  .app { display: grid; place-items: center; width: 50px; height: 50px; padding: 9px; border: 1px solid transparent; border-radius: 6px; position: relative; }
  .large { padding: 6px; }
  .current { background: #2d332d; border-color: #3a403a; }
  .current::after, .open::after { content: ""; position: absolute; bottom: 0; left: 50%; width: 8px; height: 4px; margin-left: -4px; border-radius: 2px; background: #9a9c9a; }
  .current::after { width: 20px; margin-left: -10px; background: #1590ff; }
  .tray { display: flex; align-items: center; justify-content: flex-end; }
  .lang { margin: 0 33px 0 34px; }
  .status { display: flex; gap: 8px; margin-right: 20px; }
  .clock { text-align: right; margin-right: 10px; }
</style>
